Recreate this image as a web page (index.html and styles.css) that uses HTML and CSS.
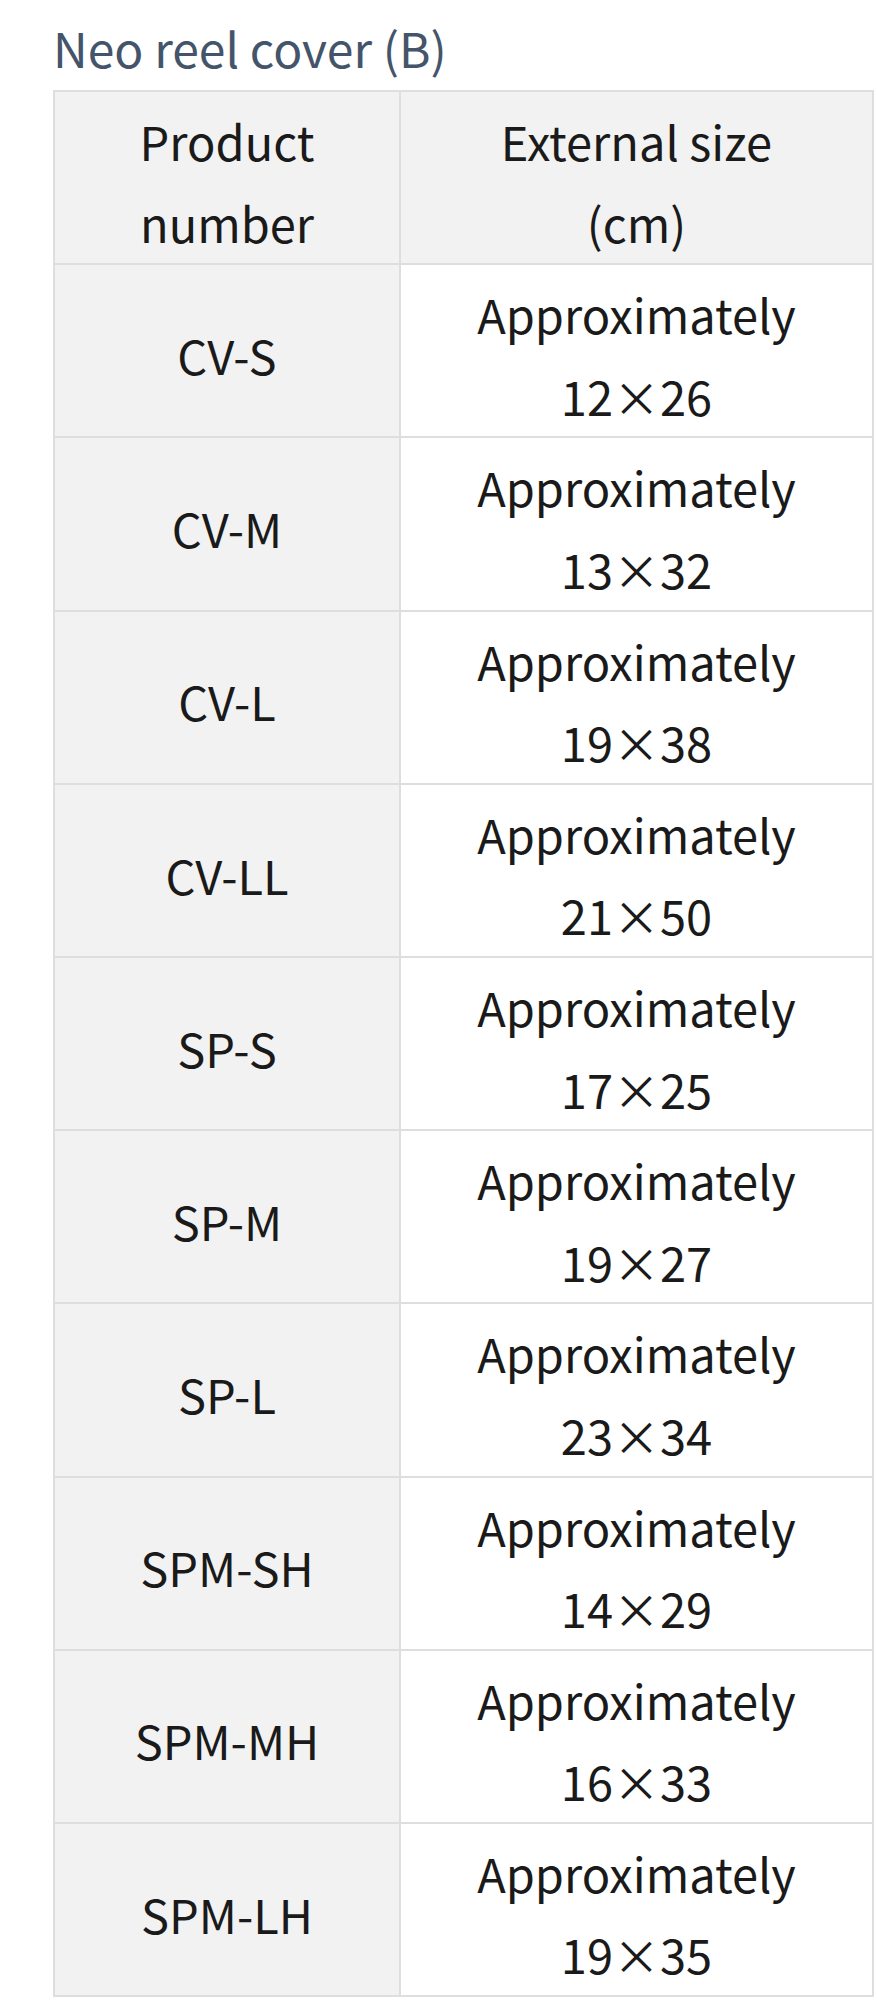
FILE: index.html
```html
<!DOCTYPE html>
<html lang="en">
<head>
<meta charset="utf-8">
<title>Neo reel cover (B)</title>
<link rel="stylesheet" href="styles.css">
</head>
<body>
<div class="page">
  <h3 class="title">Neo reel cover (B)</h3>
  <table class="spec">
    <thead>
      <tr><th class="col-no">Product<br>number</th><th class="col-size">External size<br>(cm)</th></tr>
    </thead>
    <tbody>
      <tr><th>CV-S</th><td>Approximately<br>12×26</td></tr>
      <tr><th>CV-M</th><td>Approximately<br>13×32</td></tr>
      <tr><th>CV-L</th><td>Approximately<br>19×38</td></tr>
      <tr><th>CV-LL</th><td>Approximately<br>21×50</td></tr>
      <tr><th>SP-S</th><td>Approximately<br>17×25</td></tr>
      <tr><th>SP-M</th><td>Approximately<br>19×27</td></tr>
      <tr><th>SP-L</th><td>Approximately<br>23×34</td></tr>
      <tr><th>SPM-SH</th><td>Approximately<br>14×29</td></tr>
      <tr><th>SPM-MH</th><td>Approximately<br>16×33</td></tr>
      <tr><th>SPM-LH</th><td>Approximately<br>19×35</td></tr>
    </tbody>
  </table>
</div>
</body>
</html>
```

FILE: styles.css
```css
html, body {
  margin: 0;
  padding: 0;
  background: #ffffff;
}

.page {
  padding: 17px 0 0 53px;
  font-family: "Noto Sans CJK JP", "Noto Sans", sans-serif;
}

.title {
  margin: 0 0 13px 0;
  font-size: 48px;
  line-height: 60px;
  font-weight: 400;
  color: #44546a;
}

.spec {
  border-collapse: collapse;
  width: 821px;
  table-layout: fixed;
  font-size: 47px;
  line-height: 81.6px;
  color: #1a1a1a;
}

.spec th,
.spec td {
  border: 2px solid #dedede;
  text-align: center;
  vertical-align: middle;
  font-weight: 400;
  padding: 8px 8px 0 8px;
}

.spec th {
  background: #f2f2f2;
}

.spec td {
  background: #ffffff;
}

.col-no {
  width: 328px;
}
```
